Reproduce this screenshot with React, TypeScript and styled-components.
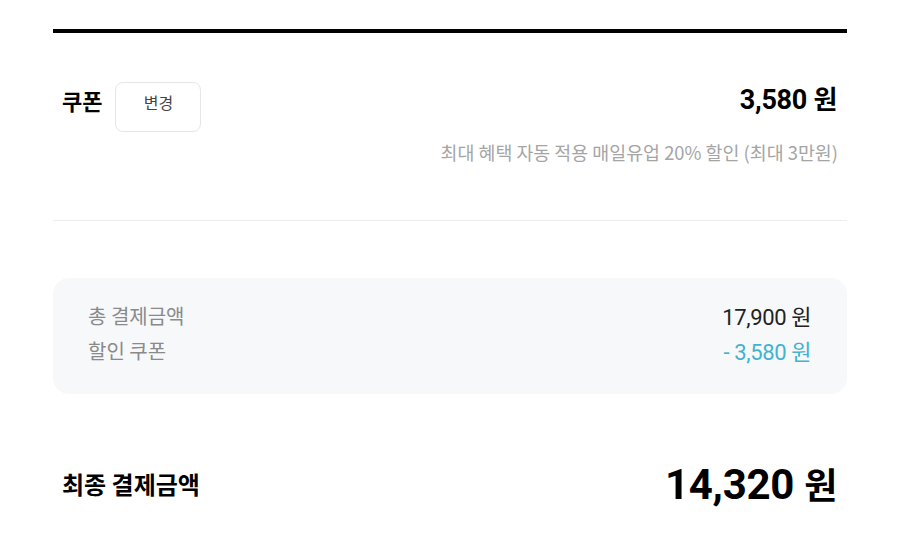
import React from "react";
import styled, { createGlobalStyle } from "styled-components";

const GlobalStyle = createGlobalStyle`
  * { box-sizing: border-box; }
  body {
    margin: 0;
    background: #ffffff;
    font-family: Roboto, "Noto Sans CJK KR", sans-serif;
    color: #111111;
  }
`;

const KR = `"Noto Sans CJK KR", "Noto Sans", sans-serif`;
const NUM = `Roboto, "Noto Sans CJK KR", sans-serif`;

export default function App() {
  return (
    <>
      <GlobalStyle />
      <Page>
        <TopRule />

        <CouponSection>
          <CouponRow>
            <CouponTitle>
              <SectionTitle>쿠폰</SectionTitle>
              <ChangeBtn>변경</ChangeBtn>
            </CouponTitle>
            <Amount size={27}>
              3,580 <Won size={26}>원</Won>
            </Amount>
          </CouponRow>
          <CouponNote>최대 혜택 자동 적용 매일유업 20% 할인 (최대 3만원)</CouponNote>
        </CouponSection>

        <Divider />

        <SummaryBox>
          <SummaryRow>
            <SummaryLabel>총 결제금액</SummaryLabel>
            <SummaryValue>17,900 원</SummaryValue>
          </SummaryRow>
          <SummaryRow>
            <SummaryLabel>할인 쿠폰</SummaryLabel>
            <SummaryValue $discount>- 3,580 원</SummaryValue>
          </SummaryRow>
        </SummaryBox>

        <FinalRow>
          <FinalLabel>최종 결제금액</FinalLabel>
          <Amount size={42}>
            14,320 <Won size={36}>원</Won>
          </Amount>
        </FinalRow>
      </Page>
    </>
  );
}

const Page = styled.div`
  width: 900px;
  height: 541px;
  padding: 29px 53px 0;
  overflow: hidden;
`;

const TopRule = styled.div`
  height: 4px;
  background: #000000;
`;

const CouponSection = styled.div`
  padding: 49px 10px 0 9px;
  height: 187px;
`;

const CouponRow = styled.div`
  display: flex;
  align-items: flex-start;
  justify-content: space-between;
`;

const CouponTitle = styled.div`
  display: flex;
  align-items: flex-start;
  gap: 13px;
`;

const SectionTitle = styled.span`
  font-family: ${KR};
  font-weight: 700;
  font-size: 22px;
  line-height: 36px;
  color: #000000;
`;

const ChangeBtn = styled.button`
  width: 86px;
  height: 50px;
  border: 1px solid #e6e6e6;
  border-radius: 8px;
  background: #ffffff;
  font-family: ${KR};
  font-size: 16px;
  color: #444444;
  padding: 0 0 11px;
  cursor: pointer;
`;

const Amount = styled.span<{ size: number }>`
  font-family: ${NUM};
  font-weight: 700;
  font-size: ${(p) => p.size}px;
  line-height: 32px;
  color: #000000;
  letter-spacing: -0.3px;
`;

const Won = styled.span<{ size: number }>`
  font-family: ${KR};
  font-size: ${(p) => p.size}px;
`;

const CouponNote = styled.div`
  margin-top: 8px;
  text-align: right;
  font-family: ${KR};
  font-size: 18.4px;
  color: #a5a5a5;
  margin-right: -1px;
  line-height: 24px;
`;

const Divider = styled.div`
  height: 1px;
  background: #ececec;
`;

const SummaryBox = styled.div`
  margin-top: 57px;
  height: 116px;
  border-radius: 16px;
  background: #f7f8fa;
  padding: 23px 36px 0 35px;
  display: flex;
  flex-direction: column;
  gap: 7px;
`;

const SummaryRow = styled.div`
  display: flex;
  justify-content: space-between;
  align-items: center;
  height: 28px;
`;

const SummaryLabel = styled.span`
  font-family: ${KR};
  font-size: 20px;
  color: #8a8a8a;
`;

const SummaryValue = styled.span<{ $discount?: boolean }>`
  font-family: ${NUM};
  font-size: 22px;
  letter-spacing: -0.4px;
  color: ${(p) => (p.$discount ? "#3fb3cf" : "#222222")};
`;

const FinalRow = styled.div`
  margin-top: 72px;
  padding: 0 10px 0 9px;
  display: flex;
  align-items: center;
  justify-content: space-between;
`;

const FinalLabel = styled.span`
  font-family: ${KR};
  font-weight: 700;
  font-size: 24px;
  color: #000000;
`;
